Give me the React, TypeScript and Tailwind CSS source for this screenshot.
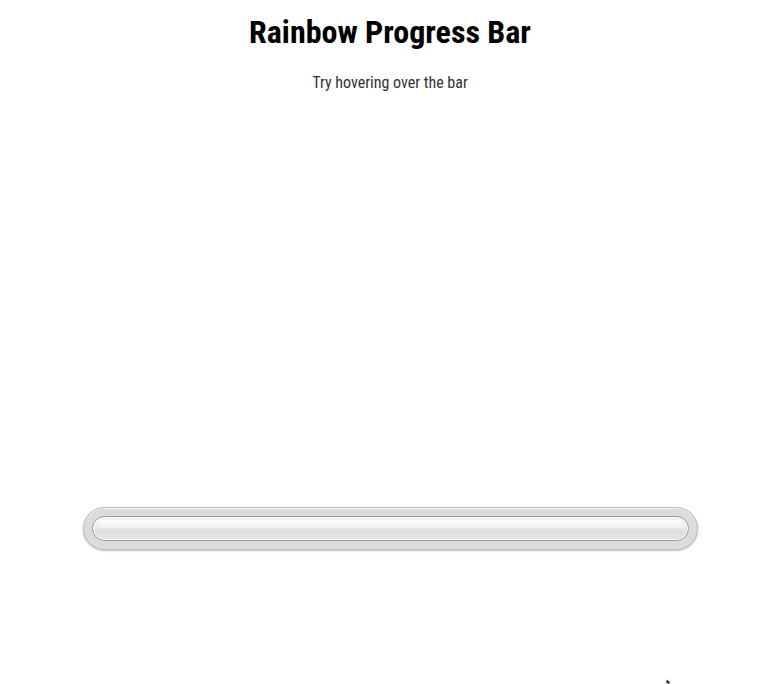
import React from "react";

export default function App() {
  return (
    <div
      className="relative min-h-[684px] w-full bg-white flex flex-col items-center overflow-hidden"
      style={{ fontFamily: '"Roboto Condensed", "Liberation Sans Narrow", Roboto, sans-serif' }}
    >
      <h1 className="mt-[12px] text-[32px] leading-[40px] font-bold text-black">
        Rainbow Progress Bar
      </h1>
      <p className="mt-[19px] text-[16px] leading-[24px] text-[#333]">
        Try hovering over the bar
      </p>
      <div className="mt-[412px] w-[615px] h-[43px] rounded-full bg-[#dcdcdc] border border-[#bdbdbd] shadow-[0_1px_2px_rgba(0,0,0,0.25),inset_0_1px_0_rgba(255,255,255,0.6)] p-[8px]">
        <div className="relative h-full w-full rounded-full border border-[#9a9a9a] shadow-[inset_0_0_0_1px_#ffffff] bg-[linear-gradient(to_bottom,#f4f4f4_0%,#ececec_45%,#dedede_60%,#e6e6e6_100%)]">
          <div className="absolute left-[6px] right-[6px] top-[3px] h-[8px] rounded-full bg-[linear-gradient(to_bottom,#ffffff,#f2f2f2)] opacity-90" />
        </div>
      </div>
      <svg
        className="absolute left-[666px] top-[679px]"
        width="6"
        height="6"
        viewBox="0 0 6 6"
      >
        <path d="M0.5 0.5 L0.5 5 L1.8 3.8 L3 5.5 L3.8 5 L2.8 3.4 L4.5 3.4 Z" fill="#222" />
      </svg>
    </div>
  );
}
